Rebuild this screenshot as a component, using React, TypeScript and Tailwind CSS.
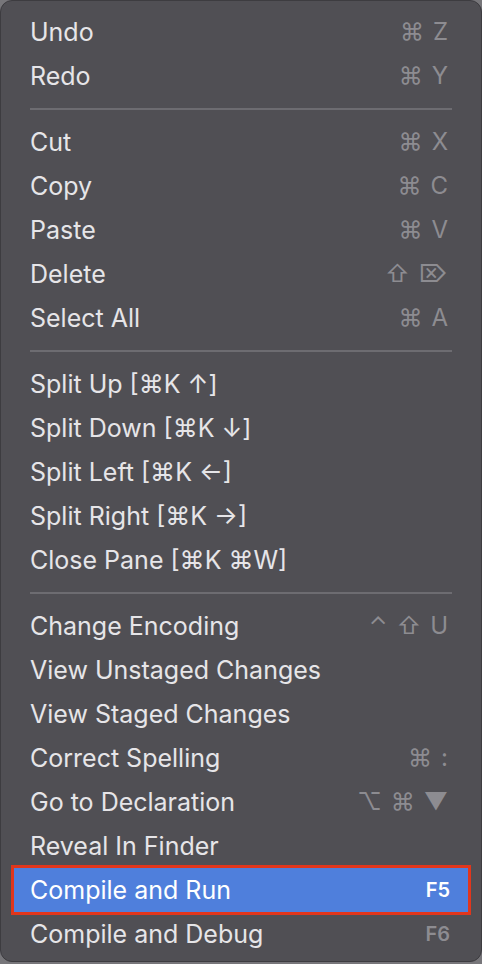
import React from "react";

type Item = { label: string; keys?: string[]; active?: boolean; fkey?: boolean };

// groups of menu entries, split by separators
const groups: Item[][] = [
  [
    { label: "Undo", keys: ["⌘", "Z"] },
    { label: "Redo", keys: ["⌘", "Y"] },
  ],
  [
    { label: "Cut", keys: ["⌘", "X"] },
    { label: "Copy", keys: ["⌘", "C"] },
    { label: "Paste", keys: ["⌘", "V"] },
    { label: "Delete", keys: ["⇧", "⌦"] },
    { label: "Select All", keys: ["⌘", "A"] },
  ],
  [
    { label: "Split Up [⌘K ↑]" },
    { label: "Split Down [⌘K ↓]" },
    { label: "Split Left [⌘K ←]" },
    { label: "Split Right [⌘K →]" },
    { label: "Close Pane [⌘K ⌘W]" },
  ],
  [
    { label: "Change Encoding", keys: ["⌃", "⇧", "U"] },
    { label: "View Unstaged Changes" },
    { label: "View Staged Changes" },
    { label: "Correct Spelling", keys: ["⌘", ":"] },
    { label: "Go to Declaration", keys: ["⌥", "⌘", "▼"] },
    { label: "Reveal In Finder" },
    { label: "Compile and Run", keys: ["F5"], active: true, fkey: true },
    { label: "Compile and Debug", keys: ["F6"], fkey: true },
  ],
];

function Keys({ item }: { item: Item }) {
  if (!item.keys) return null;
  return (
    <span
      className={`flex items-center gap-[9px] leading-none ${
        item.active ? "text-white" : "text-[#8d8c91]"
      } ${item.fkey ? "text-[20px] font-semibold" : "text-[24px]"}`}
    >
      {item.keys.map((k, i) => (
        <span key={i}>{k}</span>
      ))}
    </span>
  );
}

function Row({ item }: { item: Item }) {
  if (item.active) {
    // highlighted row with the red annotation frame around it
    return (
      <div className="mx-[10px] -my-[3px] border-[3px] border-[#e1361c]">
        <div className="flex items-center justify-between h-[44px] pl-[16px] pr-[18px] bg-[#4f7fdc] text-white">
          <span className="text-[25px] leading-none">{item.label}</span>
          <Keys item={item} />
        </div>
      </div>
    );
  }
  return (
    <div
      className={`flex items-center justify-between h-[44px] pl-[29px] ${
        item.fkey ? "pr-[31px]" : "pr-[33px]"
      } text-[#e6e5e8]`}
    >
      <span className="text-[25px] leading-none">{item.label}</span>
      <Keys item={item} />
    </div>
  );
}

export default function App() {
  return (
    <div className="w-[482px] h-[964px] bg-[#77767a] font-['Inter','DejaVu_Sans',sans-serif]">
      <div className="h-[962px] bg-[#504f54] rounded-[12px] border border-[#3d3c40] pt-[9px]">
        {groups.map((g, gi) => (
          <div key={gi}>
            {gi > 0 && (
              <div className="h-[22px] flex items-center px-[29px]">
                <div className="h-[2px] w-full bg-[#6d6c71]" />
              </div>
            )}
            {g.map((item) => (
              <Row key={item.label} item={item} />
            ))}
          </div>
        ))}
      </div>
    </div>
  );
}
